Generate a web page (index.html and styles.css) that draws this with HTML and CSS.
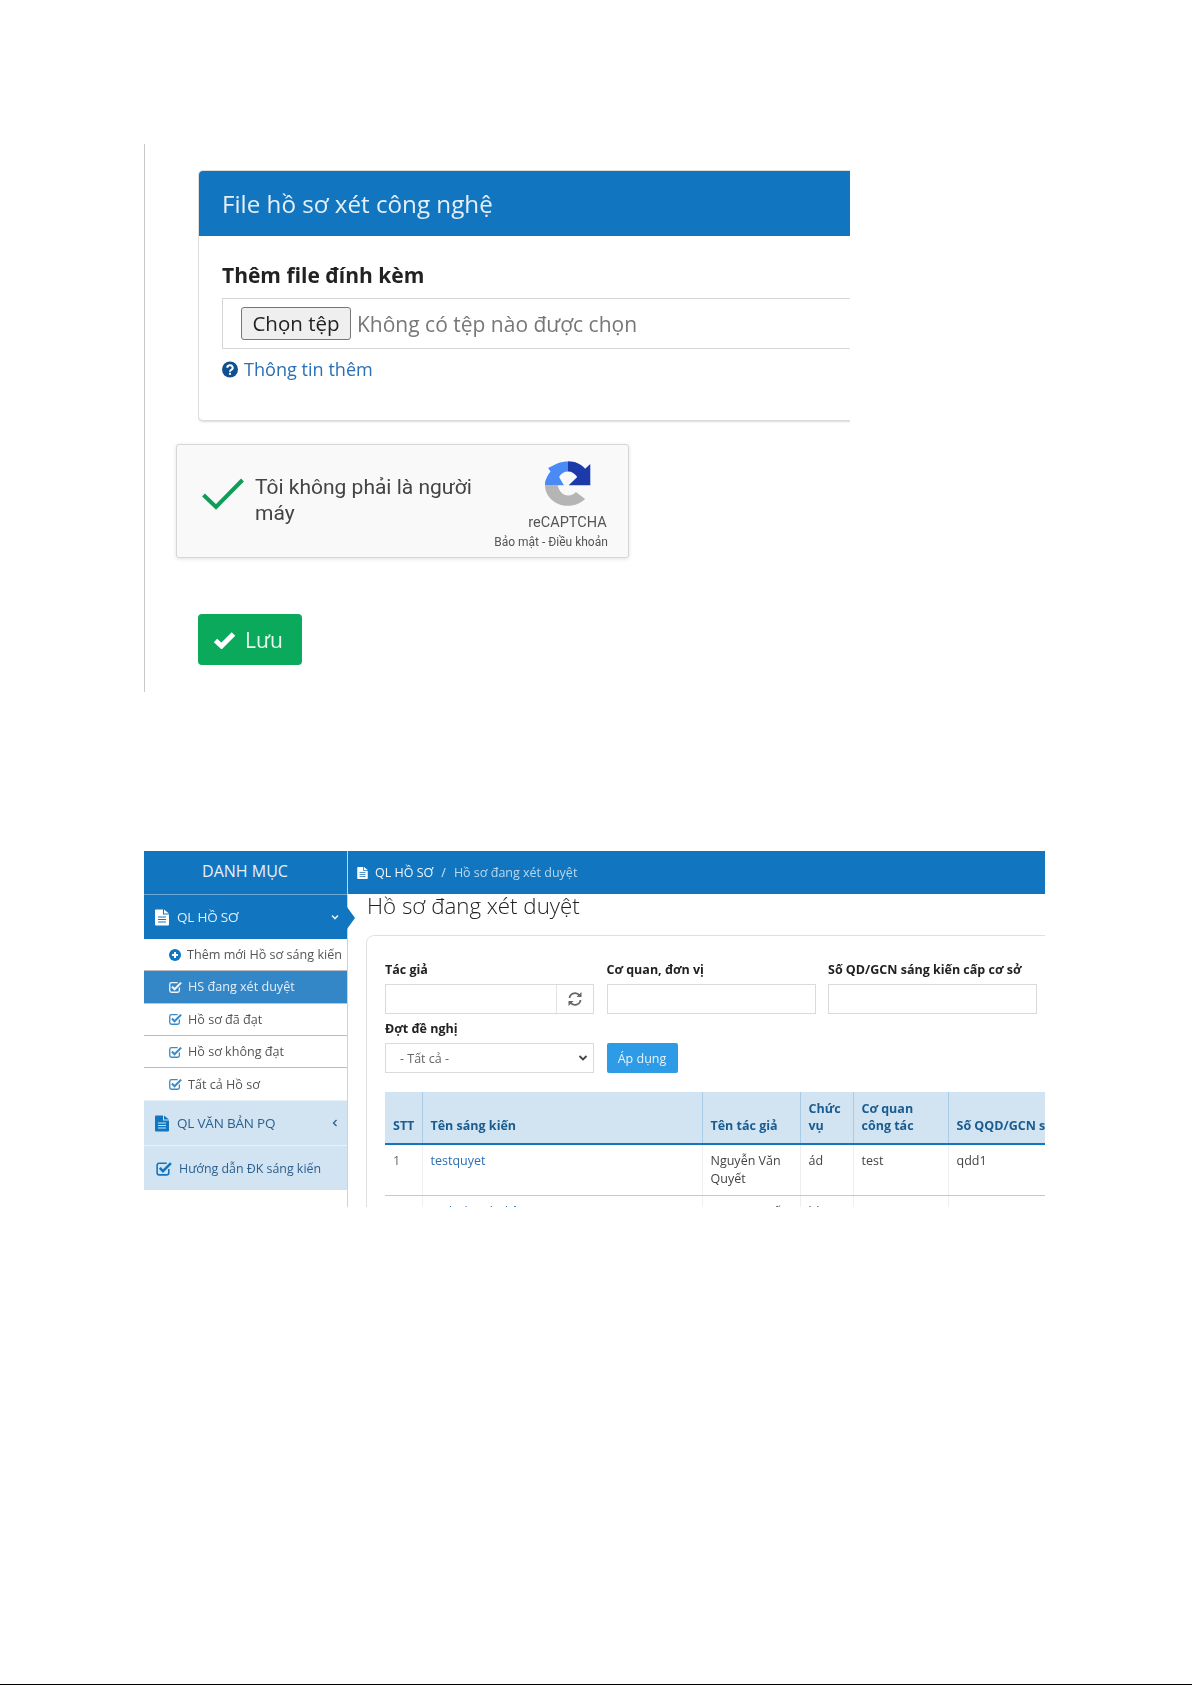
FILE: index.html
```html
<!DOCTYPE html>
<html lang="vi">
<head>
<meta charset="utf-8">
<title>Hồ sơ đang xét duyệt</title>
<link rel="stylesheet" href="styles.css">
</head>
<body>
<svg class="defs" width="0" height="0" aria-hidden="true">
  <symbol id="i-file" viewBox="0 0 14 16"><path fill="currentColor" fill-rule="evenodd" d="M0 1a1 1 0 0 1 1-1h7v5h6v10a1 1 0 0 1-1 1H1a1 1 0 0 1-1-1zM9 0l5 4H9zM3 7v1h8V7zm0 2.500v1h8v-1zM3 12v1h8v-1z"/></symbol>
  <symbol id="i-check" viewBox="0 0 16 16"><path fill="none" stroke="currentColor" stroke-width="1.500" d="M13 8.500V12a2 2 0 0 1-2 2H4a2 2 0 0 1-2-2V5a2 2 0 0 1 2-2h7"/><path fill="none" stroke="currentColor" stroke-width="2.400" d="M4.500 7.500l3 3L15 3"/></symbol>
</svg>

<section class="upload">
  <div class="panel-clip">
    <div class="panel">
      <h2 class="panel-head">File hồ sơ xét công nghệ</h2>
      <div class="panel-body">
        <div class="attach-label">Thêm file đính kèm</div>
        <div class="file-box">
          <span class="file-btn">Chọn tệp</span>
          <span class="file-none">Không có tệp nào được chọn</span>
        </div>
        <div class="more">
          <svg class="more-icon" viewBox="0 0 16 16"><circle cx="8" cy="8" r="8" fill="currentColor"/><path fill="none" stroke="#fff" stroke-width="2" d="M5.300 6.200a2.700 2.400 0 1 1 3.900 2.100c-.9.500-1.200.9-1.200 1.900"/><rect x="7" y="11.300" width="2" height="2" fill="#fff"/></svg>
          <a class="more-link">Thông tin thêm</a>
        </div>
      </div>
    </div>
  </div>
  <div class="captcha">
    <svg class="captcha-check" viewBox="0 0 42 32"><path fill="none" stroke="#0f9d58" stroke-width="4" d="M1.500 17L14 29 40.500 2"/></svg>
    <div class="captcha-text">Tôi không phải là người máy</div>
    <div class="captcha-brand">
      <svg class="captcha-logo" viewBox="0 0 140 130">
        <path fill="#b5b5b5" d="M3 70H40C44 88 56 100 70 100C80 100 88 96 93 90L120 110C107 122 90 130 70 130C32 130 3 103 3 70Z"/>
        <path fill="#4a8af4" d="M70 1V30C59 30 49 36 44 46L58 70H3V62C6 50 11 40 19 30L12 20L40 6C50 3 60 1 70 1Z"/>
        <path fill="#1c3aa9" d="M70 0C90 0 108 8 120 22L135 8V70H72L97 46C90 36 81 30 70 30Z"/>
      </svg>
      <div class="captcha-name">reCAPTCHA</div>
      <div class="captcha-links">Bảo mật - Điều khoản</div>
    </div>
  </div>
  <button class="save" type="button">
    <svg class="save-icon" viewBox="0 0 22 18"><path fill="none" stroke="#fff" stroke-width="5" d="M2 9.500l6 5.500L20 3"/></svg>
    Lưu
  </button>
</section>

<section class="app">
  <aside class="side">
    <div class="side-title">DANH MỤC</div>
    <div class="group group-open">
      <svg class="g-icon"><use href="#i-file"/></svg><span class="g-text">QL HỒ SƠ</span>
      <svg class="g-caret" viewBox="0 0 10 10"><path fill="none" stroke="currentColor" stroke-width="1.600" d="M2 3.500l3 3 3-3"/></svg>
      <span class="g-arrow"></span>
    </div>
    <div class="sub sub-add">
      <svg class="s-plus" viewBox="0 0 12 12"><circle cx="6" cy="6" r="6" fill="currentColor"/><path stroke="#fff" stroke-width="2" d="M3 6h6M6 3v6"/></svg>
      <span>Thêm mới Hồ sơ sáng kiến</span>
    </div>
    <div class="sub sub-active"><svg class="s-icon"><use href="#i-check"/></svg><span>HS đang xét duyệt</span></div>
    <div class="sub"><svg class="s-icon"><use href="#i-check"/></svg><span>Hồ sơ đã đạt</span></div>
    <div class="sub"><svg class="s-icon"><use href="#i-check"/></svg><span>Hồ sơ không đạt</span></div>
    <div class="sub sub-last"><svg class="s-icon"><use href="#i-check"/></svg><span>Tất cả Hồ sơ</span></div>
    <div class="group group-light">
      <svg class="g-icon"><use href="#i-file"/></svg><span class="g-text">QL VĂN BẢN PQ</span>
      <svg class="g-caret" viewBox="0 0 10 10"><path fill="none" stroke="currentColor" stroke-width="1.300" d="M6.500 2l-3 3 3 3"/></svg>
    </div>
    <div class="group group-light group-end">
      <svg class="g-icon g-icon-wide"><use href="#i-check"/></svg><span class="g-text g-small">Hướng dẫn ĐK sáng kiến</span>
    </div>
  </aside>
  <main class="main">
    <div class="crumbs">
      <svg class="c-icon"><use href="#i-file"/></svg>
      <span class="c-root">QL HỒ SƠ</span><span class="c-sep">/</span><span class="c-cur">Hồ sơ đang xét duyệt</span>
    </div>
    <h1 class="title">Hồ sơ đang xét duyệt</h1>
    <div class="card">
      <div class="filters">
        <div class="field">
          <label class="f-label">Tác giả</label>
          <div class="f-input f-group">
            <span class="f-addon">
              <svg class="f-refresh" viewBox="0 0 16 16"><path fill="none" stroke="currentColor" stroke-width="1.800" d="M2.500 7a5.500 5.500 0 0 1 10-2.500M13.500 9a5.500 5.500 0 0 1-10 2.500"/><path fill="currentColor" d="M14.500 1v5h-5zM1.500 15v-5h5z"/></svg>
            </span>
          </div>
        </div>
        <div class="field">
          <label class="f-label">Cơ quan, đơn vị</label>
          <div class="f-input"></div>
        </div>
        <div class="field">
          <label class="f-label">Số QD/GCN sáng kiến cấp cơ sở</label>
          <div class="f-input"></div>
        </div>
        <div class="field">
          <label class="f-label">Đợt đề nghị</label>
          <div class="f-input f-select">
            <span>- Tất cả -</span>
            <svg class="f-caret" viewBox="0 0 10 10"><path fill="none" stroke="currentColor" stroke-width="1.800" d="M1.500 3l3.500 3.500L8.500 3"/></svg>
          </div>
        </div>
        <div class="field field-btn">
          <button class="apply" type="button">Áp dụng</button>
        </div>
      </div>
      <table class="grid">
        <colgroup>
          <col class="w-stt"><col class="w-name"><col class="w-author"><col class="w-role"><col class="w-org"><col class="w-no">
        </colgroup>
        <thead>
          <tr>
            <th>STT</th><th>Tên sáng kiến</th><th>Tên tác giả</th><th>Chức vụ</th><th>Cơ quan công tác</th><th>Số QQD/GCN sáng kiến cấp cơ sở.</th>
          </tr>
        </thead>
        <tbody>
          <tr>
            <td>1</td><td><a class="t-link">testquyet</a></td><td>Nguyễn Văn Quyết</td><td>ád</td><td>test</td><td>qdd1</td>
          </tr>
          <tr>
            <td>2</td><td><a class="t-link">Kinh doanh điện</a></td><td>Trương Quốc</td><td>bb</td><td>HVTBCN</td><td>12131</td>
          </tr>
        </tbody>
      </table>
    </div>
  </main>
</section>

<div class="page-end"></div>
</body>
</html>
```
FILE: styles.css
```css
* { box-sizing: border-box; }
html, body { margin: 0; padding: 0; background: #fff; }
body { height: 1685px; overflow: hidden; font-family: "Open Sans", sans-serif; color: #222; position: relative; }
.defs { position: absolute; }

.upload { margin: 144px 0 0 144px; width: 800px; height: 548px; border-left: 1px solid #c9c9c9; padding-top: 26px; filter: blur(.4px); }
.panel-clip { margin-left: 53px; width: 652px; overflow: hidden; padding-bottom: 4px; }
.panel { width: 800px; height: 251px; border: 1px solid #ddd; border-radius: 5px; box-shadow: 0 1px 2px rgba(0,0,0,.15); background: #fff; }
.panel-head { margin: 0; height: 65px; background: #1176bf; color: #e6eff7; font-weight: 400; font-size: 24.200px; line-height: 65px; padding-left: 23px; border-radius: 4px 4px 0 0; }
.panel-body { padding: 25px 0 0 23px; }
.attach-label { font-size: 21px; font-weight: 700; line-height: 28px; color: #222; }
.file-box { margin-top: 9px; height: 51px; border: 1px solid #d4d6da; display: flex; align-items: center; padding-left: 18px; gap: 6px; }
.file-btn { width: 110px; height: 33px; background: #efefef; border: 1px solid #767676; border-radius: 3px; font-size: 20.500px; line-height: 30px; text-align: center; color: #222; }
.file-none { font-size: 21px; color: #777; }
.more { display: flex; align-items: center; gap: 6px; margin-top: 8px; height: 24px; }
.more-icon { width: 16px; height: 17px; color: #11508f; }
.more-link { font-size: 18.100px; color: #2a6fb8; }

.captcha { margin: 19px 0 0 31px; width: 453px; height: 114px; background: #f9f9f9; border: 1px solid #d6d6d6; border-radius: 3px; box-shadow: 0 1px 4px rgba(0,0,0,.12); display: flex; }
.captcha-check { width: 42px; height: 32px; margin: 33px 0 0 25px; flex: none; }
.captcha-text { width: 238px; margin: 30px 0 0 11px; font-family: Roboto, sans-serif; font-size: 21px; line-height: 25.500px; color: #444; flex: none; }
.captcha-brand { width: 120px; margin-left: -2px; display: flex; flex-direction: column; align-items: center; flex: none; }
.captcha-logo { width: 48px; height: 45px; margin-top: 16px; margin-left: 34px; }
.captcha-name { font-family: Roboto, sans-serif; font-size: 14.500px; line-height: 18px; color: #555; margin-top: 8px; margin-left: 33px; }
.captcha-links { font-family: Roboto, sans-serif; font-size: 12px; line-height: 14px; color: #555; margin-top: 3px; white-space: nowrap; }

.save { display: flex; align-items: center; gap: 9px; margin: 56px 0 0 53px; width: 104px; height: 51px; padding: 0 0 0 15px; background: #0aa95b; border: 0; border-radius: 4px; color: #e8f7ef; font-family: "Open Sans", sans-serif; font-size: 21px; }
.save-icon { width: 23px; height: 18px; }

.app { margin: 159px 0 0 144px; width: 901px; height: 356px; overflow: hidden; display: flex; filter: blur(.3px); }
.side { width: 204px; flex: none; border-right: 1px solid #cfd3d6; }
.side-title { height: 43px; background: #1176bf; color: #e6f0f8; font-size: 16px; line-height: 40px; text-align: center; padding-right: 1px; }
.group { height: 45px; display: flex; align-items: center; padding: 0 6px 0 11px; font-size: 13.500px; position: relative; }
.group-open { background: #1176bf; color: #e3eef7; border-top: 1px solid #6fa9d6; width: 203px; }
.group-light { background: #d2e4f2; color: #2b5f8e; border-top: 1px solid #eaf2f8; width: 203px; }
.g-icon { width: 14px; height: 17px; color: inherit; flex: none; }
.group-open .g-icon { color: #fff; }
.group-light .g-icon { color: #1176bf; }
.g-icon-wide { width: 17px; height: 17px; }
.g-text { margin-left: 8px; flex: 1; font-weight: 400; letter-spacing: -.2px; }
.g-small { font-size: 12.400px; margin-left: 7px; letter-spacing: 0; }
.g-caret { width: 10px; height: 10px; flex: none; margin-right: 1px; }
.g-arrow { position: absolute; left: 203px; top: 12px; width: 0; height: 0; border-left: 8px solid #1176bf; border-top: 11px solid transparent; border-bottom: 11px solid transparent; z-index: 2; }

.sub { height: 32.300px; width: 203px; display: flex; align-items: center; padding-left: 25px; font-size: 12.600px; color: #555; border-bottom: 1px solid #b9bdc1; white-space: nowrap; }
.sub-add span { margin-left: 6px; }
.s-plus { width: 12px; height: 12px; color: #1176bf; flex: none; }
.s-icon { width: 14px; height: 14px; color: #3a8ac8; flex: none; margin-right: 6px; margin-left: -1px; }
.sub-active { background: #3487c7; color: #e3eef7; border-bottom-color: #a9cbe6; }
.sub-active .s-icon { color: #eef5fb; }
.sub-last { border-bottom: 0; }

.main { flex: 1; min-width: 0; overflow: hidden; }
.crumbs { height: 43px; background: #1176bf; display: flex; align-items: center; padding-left: 9px; font-size: 12.500px; color: #e3eef7; white-space: nowrap; }
.c-icon { width: 11px; height: 12px; color: #fff; margin-right: 7px; flex: none; }
.c-root { font-weight: 400; color: #f1f6fb; }
.c-sep { margin: 0 8px; color: #cfe2f1; }
.c-cur { color: #bcd7ec; font-size: 12.500px; }
.title { margin: 0 0 0 19px; font-size: 22.300px; font-weight: 300; line-height: 24px; color: #222; height: 41px; white-space: nowrap; }
.card { margin-left: 18px; width: 800px; height: 300px; border: 1px solid #e0e0e0; border-radius: 8px 0 0 0; padding: 25px 0 0 18px; }
.filters { display: grid; grid-template-columns: 209px 209px 209px; column-gap: 12.500px; row-gap: 0; width: 660px; }
.field { height: 59px; }
.f-label { display: block; font-size: 12.500px; font-weight: 700; line-height: 18px; height: 23px; color: #222; white-space: nowrap; }
.f-input { height: 30px; border: 1px solid #d8dbde; background: #fff; }
.f-group { display: flex; justify-content: flex-end; }
.f-addon { width: 37px; border-left: 1px solid #e4e4e4; display: flex; align-items: center; justify-content: center; }
.f-refresh { width: 16px; height: 16px; color: #666; }
.f-select { display: flex; align-items: center; justify-content: space-between; padding: 0 5px 0 14px; font-size: 12.500px; color: #666; }
.f-caret { width: 10px; height: 10px; color: #444; }
.field-btn { padding-top: 23px; }
.apply { height: 30px; width: 71px; padding: 0; border: 0; border-radius: 2px; background: #2d9be5; color: #e8f3fb; font-family: "Open Sans", sans-serif; font-size: 12.500px; }

.grid { border-collapse: collapse; table-layout: fixed; width: 679px; margin-top: 12.500px; font-size: 12.500px; }
.w-stt { width: 37px; }
.w-name { width: 280px; }
.w-author { width: 98px; }
.w-role { width: 53px; }
.w-org { width: 95px; }
.w-no { width: 116px; }
.grid th { height: 52px; background: #d2e4f2; color: #1a5c8f; font-weight: 700; text-align: left; vertical-align: bottom; line-height: 17.500px; padding: 0 7px 8px 8px; border-left: 1px solid #a9cce6; border-bottom: 2px solid #1176bf; white-space: normal; }
.grid th:first-child { border-left: 0; }
.grid th:last-child { white-space: nowrap; }
.grid td { height: 50px; vertical-align: top; padding: 7px 7px 7px 8px; line-height: 18px; color: #444; border-left: 1px solid #eceeef; border-bottom: 1px solid #c8c8c8; }
.grid td:first-child { border-left: 0; color: #666; }
.t-link { color: #2a6fb8; }

.page-end { position: absolute; left: 0; right: 0; bottom: 0; height: 1px; background: #000; }
```
